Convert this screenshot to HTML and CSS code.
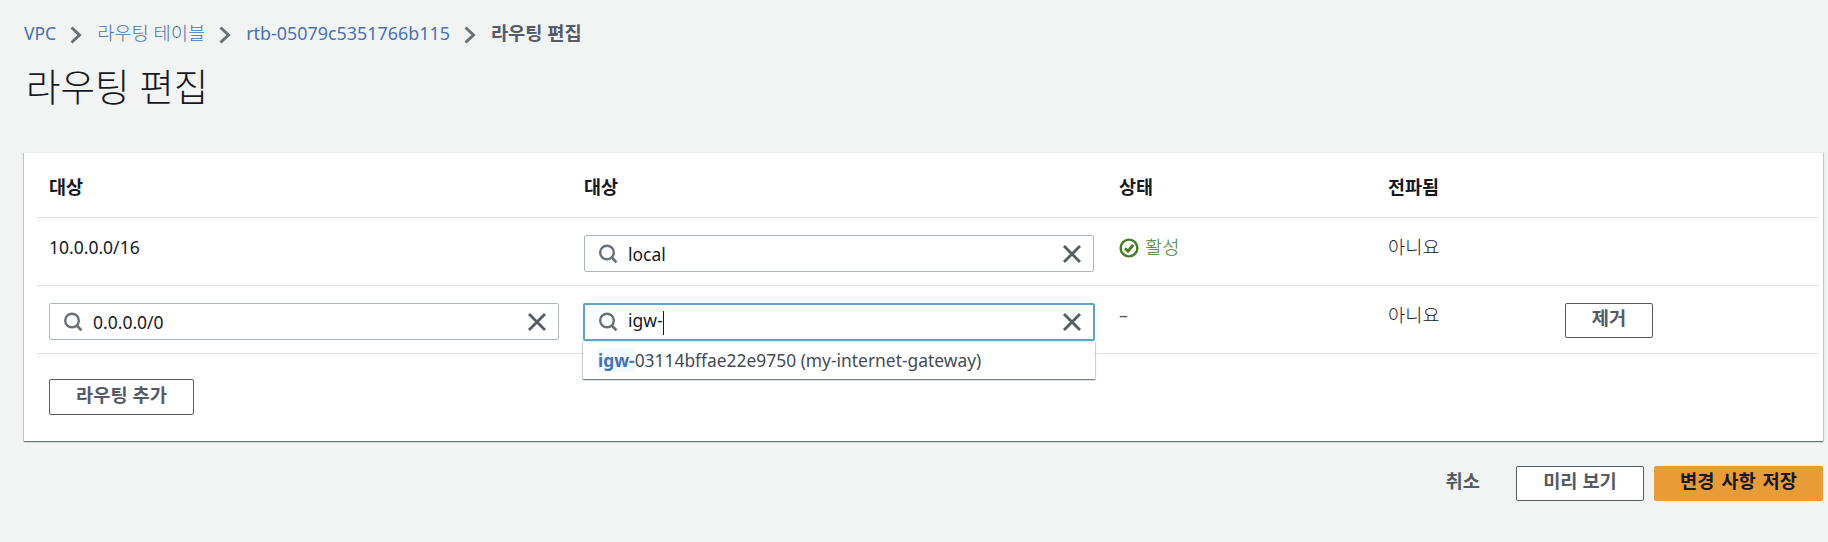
FILE: index.html
```html
<!DOCTYPE html>
<html lang="ko">

<head>
    <meta charset="UTF-8">
    <title>라우팅 편집</title>
    <link rel="stylesheet" href="styles.css">
</head>

<body>
    <svg class="icon_defs" width="0" height="0">
        <symbol id="i_search" viewBox="0 0 20 20">
            <circle cx="9" cy="8.5" r="6.8" fill="none" stroke="currentColor" stroke-width="2.4"/>
            <path d="M13.6 13.2L18.4 18.4" fill="none" stroke="currentColor" stroke-width="2.8"/>
        </symbol>
        <symbol id="i_close" viewBox="0 0 20 20">
            <path d="M2 2L18 18M18 2L2 18" fill="none" stroke="currentColor" stroke-width="2.8"/>
        </symbol>
        <symbol id="i_chevron" viewBox="0 0 12 18">
            <path d="M1.5 1.5L9.5 9L1.5 16.5" fill="none" stroke="currentColor" stroke-width="3"/>
        </symbol>
    </svg>

    <nav class="crumbs">
        <a class="crumb_link">VPC</a>
        <svg class="crumb_sep"><use href="#i_chevron"/></svg>
        <a class="crumb_link ko">라우팅 테이블</a>
        <svg class="crumb_sep"><use href="#i_chevron"/></svg>
        <a class="crumb_link crumb_id">rtb-05079c5351766b115</a>
        <svg class="crumb_sep"><use href="#i_chevron"/></svg>
        <span class="crumb_now ko">라우팅 편집</span>
    </nav>

    <h1 class="page_title">라우팅 편집</h1>

    <section class="panel">
        <div class="row row_head">
            <div class="cell">대상</div>
            <div class="cell">대상</div>
            <div class="cell">상태</div>
            <div class="cell">전파됨</div>
        </div>

        <div class="row">
            <div class="cell cell_text">10.0.0.0/16</div>
            <div class="cell">
                <div class="search">
                    <svg class="search_icon"><use href="#i_search"/></svg>
                    <span class="search_value">local</span>
                    <svg class="search_clear"><use href="#i_close"/></svg>
                </div>
            </div>
            <div class="cell cell_text status_ok ko">
                <svg class="status_icon" viewBox="0 0 20 20">
                    <circle cx="10" cy="10" r="8.4" fill="none" stroke="currentColor" stroke-width="2.4"/>
                    <path d="M6 10.2L9 13.2L14.2 7" fill="none" stroke="currentColor" stroke-width="2.8"/>
                </svg>
                활성
            </div>
            <div class="cell cell_text ko">아니요</div>
        </div>

        <div class="row">
            <div class="cell">
                <div class="search">
                    <svg class="search_icon"><use href="#i_search"/></svg>
                    <span class="search_value">0.0.0.0/0</span>
                    <svg class="search_clear"><use href="#i_close"/></svg>
                </div>
            </div>
            <div class="cell">
                <div class="search_wrap">
                    <div class="search search_focus">
                        <svg class="search_icon"><use href="#i_search"/></svg>
                        <span class="search_value">igw-<span class="caret"></span></span>
                        <svg class="search_clear"><use href="#i_close"/></svg>
                    </div>
                    <div class="dropdown">
                        <div class="dropdown_item"><mark class="match">igw-</mark>03114bffae22e9750 (my-internet-gateway)</div>
                    </div>
                </div>
            </div>
            <div class="cell cell_text cell_muted">–</div>
            <div class="cell cell_text ko">아니요</div>
            <div class="cell">
                <button class="btn btn_remove">제거</button>
            </div>
        </div>

        <div class="panel_foot">
            <button class="btn btn_add">라우팅 추가</button>
        </div>
    </section>

    <div class="actions">
        <button class="btn_text">취소</button>
        <button class="btn btn_preview">미리 보기</button>
        <button class="btn btn_save">변경 사항 저장</button>
    </div>
</body>

</html>
```

FILE: styles.css
```css
* {
    margin: 0;
    padding: 0;
    box-sizing: border-box;
}

body {
    background: #f2f3f3;
    color: #16191f;
    font-family: "Noto Sans", "Noto Sans CJK KR", sans-serif;
    font-size: 17.5px;
    line-height: 22px;
    padding: 0 5px 0 24px;
    overflow: hidden;
}

.ko {
    font-size: 18.7px;
    font-weight: 300;
}

.icon_defs {
    position: absolute;
}

.crumbs {
    display: flex;
    align-items: center;
    height: 22px;
    margin-top: 22px;
}

.crumb_link {
    color: #4472b4;
}

.crumb_id {
    font-size: 17.9px;
}

.crumb_now {
    color: #545b64;
    font-weight: 700;
}

.crumb_sep {
    width: 12px;
    height: 18px;
    margin: 3px 15px 0 14px;
    color: #687078;
}

.page_title {
    font-size: 37.5px;
    font-weight: 300;
    line-height: 50px;
    margin-top: 18px;
    padding-left: 2px;
}

.panel {
    background: #fff;
    margin-top: 40px;
    padding: 0 4px 0 13px;
    height: 289px;
    border-top: 1px solid #eaeded;
    box-shadow: 0 1px 1px 0 rgba(0, 28, 36, 0.4), 1px 1px 1px 0 rgba(0, 28, 36, 0.15), -1px 1px 1px 0 rgba(0, 28, 36, 0.15);
}

.row {
    display: grid;
    grid-template-columns: 535px 535px 269px 177px 1fr;
    height: 68px;
    border-bottom: 1px solid #dfe2e2;
}

.row_head {
    height: 65px;
    font-size: 18.5px;
    font-weight: 700;
    align-items: center;
}

.cell {
    padding: 17px 13px 0 12px;
}

.row_head .cell {
    padding-top: 3px;
}

.cell_text {
    padding-top: 18px;
}

.cell_muted {
    color: #545b64;
}

.status_ok {
    color: #3f7e22;
    display: flex;
    align-items: flex-start;
}

.status_icon {
    width: 20px;
    height: 20px;
    margin: 2px 6px 0 0;
}

.search {
    display: flex;
    align-items: center;
    height: 37px;
    padding: 0 11px 0 13px;
    background: #fff;
    border: 1px solid #aab7b8;
    border-radius: 2px;
}

.search_focus {
    height: 38px;
    margin: 0 -1px;
    border: 2px solid #5ba3cb;
}

.search_icon {
    width: 20px;
    height: 20px;
    color: #687078;
    flex: none;
}

.search_value {
    flex: 1;
    margin-left: 10px;
}

.search_clear {
    width: 20px;
    height: 20px;
    color: #545b64;
    flex: none;
}

.caret {
    display: inline-block;
    width: 1px;
    height: 24px;
    background: #16191f;
    vertical-align: middle;
}

.search_wrap {
    position: relative;
}

.dropdown {
    position: absolute;
    top: 38px;
    left: -1px;
    right: -1px;
    height: 38px;
    background: #fff;
    border-top: 1px solid #eaeded;
    box-shadow: 0 1px 1px 0 rgba(0, 28, 36, 0.4), 1px 1px 1px 0 rgba(0, 28, 36, 0.15), -1px 1px 1px 0 rgba(0, 28, 36, 0.15);
    z-index: 2;
}

.dropdown_item {
    padding: 7px 15px;
    color: #444b54;
    font-size: 17.4px;
}

.match {
    background: #f1faff;
    color: #4472b4;
    font-weight: 700;
}

.btn {
    display: block;
    font-family: inherit;
    font-size: 18.7px;
    font-weight: 700;
    line-height: 22px;
    color: #545b64;
    background: #fff;
    border: 1px solid #545b64;
    border-radius: 2px;
    padding-bottom: 5px;
}

.btn_remove {
    width: 88px;
    height: 35px;
}

.panel_foot {
    padding: 25px 12px 0;
}

.btn_add {
    width: 145px;
    height: 36px;
}

.actions {
    display: flex;
    align-items: center;
    justify-content: flex-end;
    margin-top: 25px;
}

.btn_text {
    font-family: inherit;
    font-size: 18.7px;
    font-weight: 700;
    line-height: 22px;
    color: #545b64;
    background: none;
    border: 0;
    margin-right: 36px;
    padding-bottom: 6px;
}

.btn_preview {
    width: 128px;
    height: 35px;
    margin-right: 10px;
}

.btn_save {
    width: 169px;
    height: 35px;
    color: #16191f;
    background: #e99b38;
    border-color: #e99b38;
    word-spacing: 2px;
}
```
